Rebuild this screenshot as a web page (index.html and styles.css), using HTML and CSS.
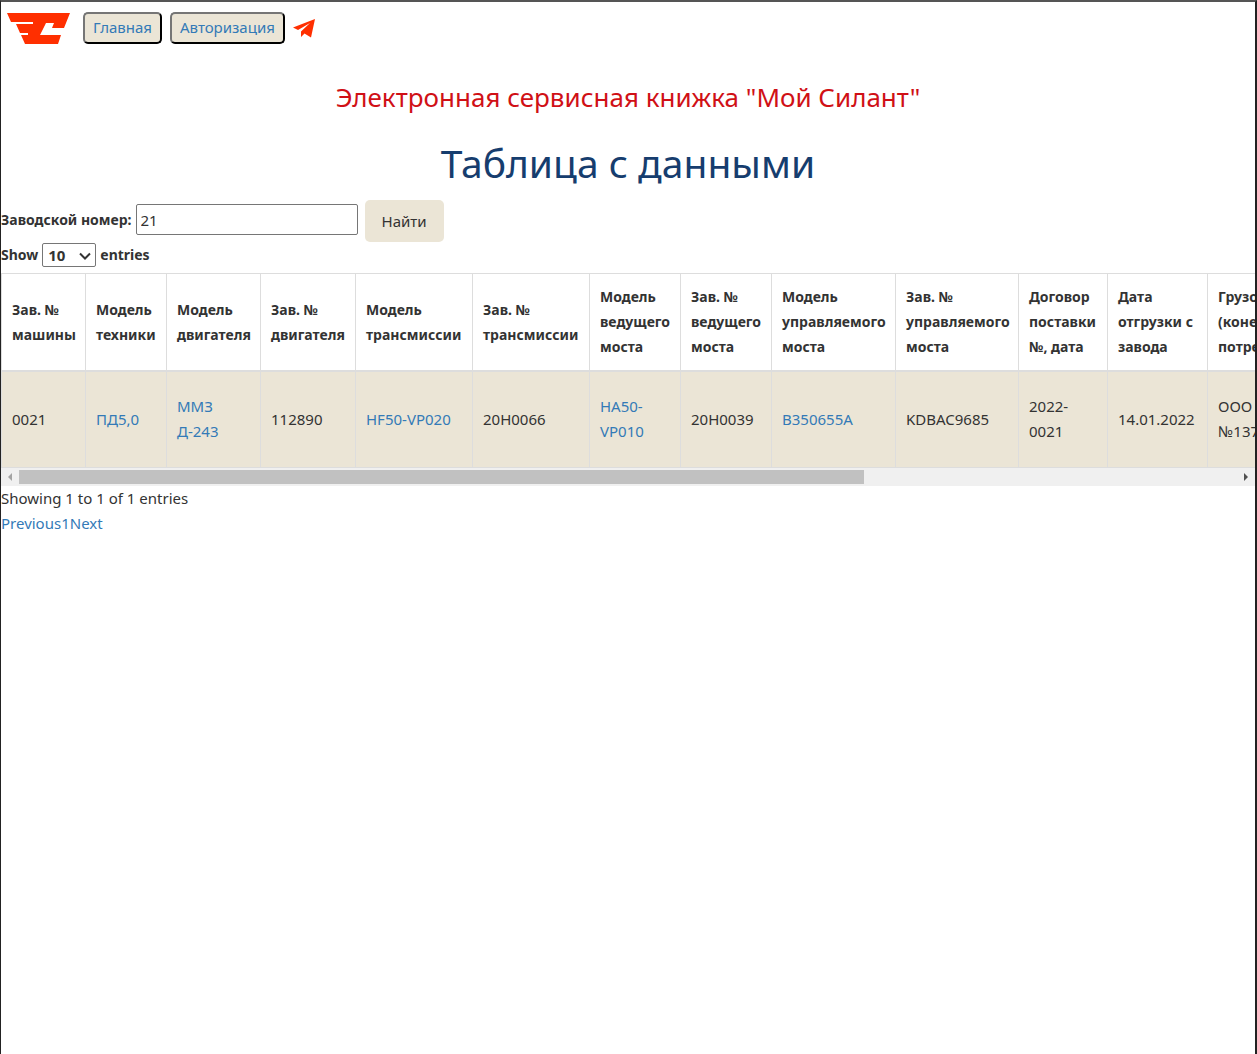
FILE: index.html
```html
<!DOCTYPE html>
<html lang="ru">
<head>
<meta charset="utf-8">
<title>Мой Силант</title>
<link rel="stylesheet" href="styles.css">
</head>
<body>
<header class="topbar">
  <a class="logo" href="#" aria-label="Силант">
    <svg width="63" height="31" viewBox="0 0 63 31"><path fill="#ff2f00" d="M0 0H63L57 15H45L47 10H39L33 22H54L51 31H18L14 22H21V20H13L9 11H26V9H4Z"/></svg>
  </a>
  <button class="nav-button" type="button">Главная</button>
  <button class="nav-button" type="button">Авторизация</button>
  <a class="telegram" href="#" aria-label="Telegram">
    <svg width="22" height="19" viewBox="0 0 22 19"><path fill="#ff2f00" d="M22 0L0 8.500L5 11L17 4L8 12.500V18L11.500 14.500L18 18.500Z"/></svg>
  </a>
</header>
<main>
  <h2 class="subtitle">Электронная сервисная книжка "Мой Силант"</h2>
  <h1 class="title">Таблица с данными</h1>
  <form class="search">
    <label for="serial">Заводской номер:</label>
    <input id="serial" class="search-input" type="text" value="21">
    <button class="search-button" type="button">Найти</button>
  </form>
  <div class="length">
    <label for="length">Show</label>
    <span class="select-box">
      <select id="length" class="length-select"><option>10</option></select>
      <svg class="chevron" width="12" height="8" viewBox="0 0 12 8"><path d="M1 1.500L6 6.500L11 1.500" fill="none" stroke="#333" stroke-width="2"/></svg>
    </span>
    <span>entries</span>
  </div>
  <div class="table-wrap">
    <table class="data">
      <colgroup>
        <col class="w84"><col class="w81"><col class="w94"><col class="w95"><col class="w117"><col class="w117"><col class="w91"><col class="w91"><col class="w124"><col class="w123"><col class="w89"><col class="w100"><col class="w-rest">
      </colgroup>
      <thead>
        <tr>
          <th>Зав. №<br>машины</th>
          <th>Модель<br>техники</th>
          <th>Модель<br>двигателя</th>
          <th>Зав. №<br>двигателя</th>
          <th>Модель<br>трансмиссии</th>
          <th>Зав. №<br>трансмиссии</th>
          <th>Модель<br>ведущего<br>моста</th>
          <th>Зав. №<br>ведущего<br>моста</th>
          <th>Модель<br>управляемого<br>моста</th>
          <th>Зав. №<br>управляемого<br>моста</th>
          <th>Договор<br>поставки<br>№, дата</th>
          <th>Дата<br>отгрузки с<br>завода</th>
          <th>Грузополучатель<br>(конечный<br>потребитель)</th>
        </tr>
      </thead>
      <tbody>
        <tr>
          <td>0021</td>
          <td><a href="#">ПД5,0</a></td>
          <td><a href="#">ММЗ<br>Д-243</a></td>
          <td>112890</td>
          <td><a href="#">HF50-VP020</a></td>
          <td>20H0066</td>
          <td><a href="#">HA50-<br>VP010</a></td>
          <td>20H0039</td>
          <td><a href="#">B350655A</a></td>
          <td>KDBAC9685</td>
          <td>2022-<br>0021</td>
          <td>14.01.2022</td>
          <td>ООО<br>№137</td>
        </tr>
      </tbody>
    </table>
  </div>
  <div class="scrollbar">
    <svg width="18" height="18" viewBox="0 0 18 18"><path fill="#a3a3a3" d="M11 5V13L7 9Z"/></svg>
    <div class="track"><div class="thumb"></div></div>
    <svg width="18" height="18" viewBox="0 0 18 18"><path fill="#505050" d="M7 5V13L11 9Z"/></svg>
  </div>
  <div class="info">Showing 1 to 1 of 1 entries</div>
  <nav class="pager"><a href="#">Previous</a><a href="#">1</a><a href="#">Next</a></nav>
</main>
</body>
</html>
```
FILE: styles.css
```css
* { box-sizing: border-box; }
body {
  margin: 0;
  min-height: 100vh;
  border: solid #222;
  border-width: 2px 2px 0 1px;
  border-top-color: #555;
  background: #fff;
  color: #333;
  font: 15px/25px "Noto Sans", sans-serif;
}
a { color: #337ab7; text-decoration: none; }
.topbar { display: flex; align-items: center; padding: 9px 6px; }
.logo, .telegram { display: flex; padding-top: 2px; }
.logo { margin-right: 13px; }
.nav-button {
  height: 32px;
  margin-right: 8px;
  padding: 0 8px;
  border: 2px outset #767676;
  border-color: #767676 #212121 #212121 #767676;
  border-radius: 5px;
  background: #ebe5d6;
  color: #337ab7;
  font: inherit;
}
.subtitle {
  margin: 24px 0 0;
  color: #d01016;
  font-size: 26px;
  font-weight: 400;
  line-height: 40px;
  text-align: center;
}
.title {
  margin: 20px 0 11px;
  color: #163d6e;
  font-size: 39px;
  font-weight: 400;
  line-height: 52px;
  text-align: center;
}
.search, .length { display: flex; align-items: center; gap: 4px; font-size: 14px; font-weight: 700; }
.search { height: 42px; }
.search-input {
  width: 222px;
  height: 31px;
  margin: 0 3px 3px 0;
  padding: 0 4px;
  border: 1px solid #767676;
  border-radius: 2px;
  color: #333;
  font: inherit;
  font-size: 15px;
  font-weight: 400;
}
.search label { margin-bottom: 3px; }
.search-button {
  height: 42px;
  padding: 0 17px;
  border: 0;
  border-radius: 5px;
  background: #ebe5d6;
  color: #333;
  font: inherit;
  font-size: 15px;
  font-weight: 400;
}
.select-box { position: relative; display: flex; }
.length-select {
  width: 54px;
  height: 24px;
  padding: 0 5px;
  appearance: none;
  border: 1px solid #767676;
  border-radius: 2px;
  background: #fff;
  color: #333;
  font: inherit;
  font-size: 15px;
  line-height: 22px;
}
.chevron { position: absolute; right: 5px; top: 9px; pointer-events: none; }
.table-wrap { margin-top: 6px; overflow-x: auto; scrollbar-width: none; }
.data { width: 1807px; table-layout: fixed; border-collapse: collapse; }
.data th, .data td {
  height: 97px;
  padding: 0 10px;
  border: 1px solid #ddd;
  text-align: left;
  vertical-align: middle;
  white-space: nowrap;
}
.data th { border-bottom-width: 2px; font-size: 14px; font-weight: 700; }
.data td { background: #ebe5d6; }
.w81 { width: 81px; }
.w84 { width: 84px; }
.w89 { width: 89px; }
.w91 { width: 91px; }
.w94 { width: 94px; }
.w95 { width: 95px; }
.w100 { width: 100px; }
.w117 { width: 117px; }
.w123 { width: 123px; }
.w124 { width: 124px; }
.scrollbar { display: flex; height: 18px; background: #f0f0f0; }
.track { flex: 1; padding: 2px 0; }
.thumb { width: 69.4%; height: 14px; background: #c1c1c1; }
.pager { display: flex; }
```
